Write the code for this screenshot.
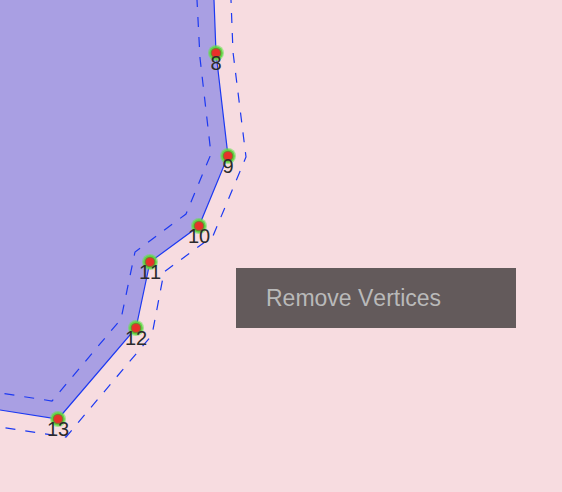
type Vertex = { id: number; x: number; y: number };

const vertices: Vertex[] = [
  { id: 8, x: 216, y: 53 },
  { id: 9, x: 228, y: 156 },
  { id: 10, x: 199, y: 226 },
  { id: 11, x: 150, y: 262 },
  { id: 12, x: 136, y: 328 },
  { id: 13, x: 58, y: 419 },
];

const edge = "214,0 216,53 228,156 199,226 150,262 136,328 58,419 0,410";
const innerBuffer = "197,0 200,58 211,154 186,214 135,252 121,319 52,401 0,393";
const outerBuffer = "231,0 233,52 246,157 213,236 164,272 152,335 66,437 0,427";

function PolygonCanvas() {
  return (
    <svg
      className="block h-full w-full"
      role="img"
      aria-label="Polygon with numbered vertices"
    >
      <polygon points={`0,0 ${edge}`} fill="#a99fe3" />
      <g fill="none" stroke="#1c39f2" strokeWidth="1.2">
        <polyline points={edge} />
        <polyline points={innerBuffer} strokeDasharray="10 10" strokeDashoffset="3" />
        <polyline points={outerBuffer} strokeDasharray="10 10" strokeDashoffset="7" />
      </g>
      {vertices.map((v) => (
        <g key={v.id}>
          <circle cx={v.x} cy={v.y} r="8" fill="#66e04c" fillOpacity="0.55" />
          <circle cx={v.x} cy={v.y} r="6.8" fill="#5fd843" />
          <circle cx={v.x} cy={v.y} r="5.3" fill="#7d7a2e" />
          <circle cx={v.x} cy={v.y} r="4" fill="#e8302a" />
        </g>
      ))}
      {vertices.map((v) => (
        <text
          key={v.id}
          x={v.x}
          y={v.y + 17}
          textAnchor="middle"
          className="fill-[#2b2b2b] font-['Liberation_Sans',Arial,sans-serif] text-[20px] [font-kerning:none]"
        >
          {v.id}
        </text>
      ))}
    </svg>
  );
}

function ContextMenu() {
  return (
    <div className="absolute top-[268px] left-[236px] w-[280px] bg-[#635a5b]">
      <button
        type="button"
        className="block h-[60px] w-full px-[30px] text-left font-['Liberation_Sans',Arial,sans-serif] text-[23px] text-[#b9b9b9] [font-kerning:none]"
      >
        Remove Vertices
      </button>
    </div>
  );
}

export default function App() {
  return (
    <main className="relative h-screen w-full overflow-hidden bg-[#f7dce0]">
      <PolygonCanvas />
      <ContextMenu />
    </main>
  );
}
